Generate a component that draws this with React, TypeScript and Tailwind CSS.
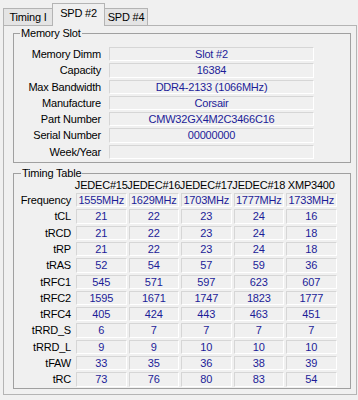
const slotRows: [string, string][] = [
  ["Memory Dimm", "Slot #2"],
  ["Capacity", "16384"],
  ["Max Bandwidth", "DDR4-2133 (1066MHz)"],
  ["Manufacture", "Corsair"],
  ["Part Number", "CMW32GX4M2C3466C16"],
  ["Serial Number", "00000000"],
  ["Week/Year", ""],
];

const headers = ["JEDEC#15", "JEDEC#16", "JEDEC#17", "JEDEC#18", "XMP3400"];

const timings: [string, string[]][] = [
  ["Frequency", ["1555MHz", "1629MHz", "1703MHz", "1777MHz", "1733MHz"]],
  ["tCL", ["21", "22", "23", "24", "16"]],
  ["tRCD", ["21", "22", "23", "24", "18"]],
  ["tRP", ["21", "22", "23", "24", "18"]],
  ["tRAS", ["52", "54", "57", "59", "36"]],
  ["tRFC1", ["545", "571", "597", "623", "607"]],
  ["tRFC2", ["1595", "1671", "1747", "1823", "1777"]],
  ["tRFC4", ["405", "424", "443", "463", "451"]],
  ["tRRD_S", ["6", "7", "7", "7", "7"]],
  ["tRRD_L", ["9", "9", "10", "10", "10"]],
  ["tFAW", ["33", "35", "36", "38", "39"]],
  ["tRC", ["73", "76", "80", "83", "54"]],
];

// sunken readonly box, like a disabled win32 edit
function Field({ value }: { value: string }) {
  return (
    <div className="h-[14.3px] border border-t-[#d6d6d6] border-l-[#d6d6d6] border-r-white border-b-white text-center leading-[12px] whitespace-nowrap text-[#1c1c98]">
      {value}
    </div>
  );
}

export default function App() {
  return (
    <div className="h-[400px] w-[358px] overflow-hidden bg-[#f0f0f0] font-['Liberation_Sans',Arial,sans-serif] text-[11px] tracking-[-0.2px] text-black">
      {/* tabs */}
      <div className="flex h-[25px] items-end pl-[3px]">
        <div className="h-[17px] w-[50px] border border-b-0 border-[#b4b4b4] bg-[#e4e4e4] pt-[2px] text-center leading-[13px]">
          Timing I
        </div>
        <div className="relative z-10 -mx-px mb-[-1px] h-[23px] w-[53px] border border-b-0 border-[#b4b4b4] bg-[#f0f0f0] pt-[3px] text-center leading-[13px]">
          SPD #2
        </div>
        <div className="h-[17px] w-[44px] border border-b-0 border-[#b4b4b4] bg-[#e4e4e4] pt-[2px] text-center leading-[13px]">
          SPD #4
        </div>
      </div>

      <div className="ml-[3px] mr-[1px] h-[370px] border border-[#b4b4b4] bg-[#f0f0f0]">
        <fieldset className="mt-[1px] ml-[9px] mr-[5px] border border-[#a0a0a0] p-0">
          <legend className="ml-[6px] px-[1px] leading-[13px]">Memory Slot</legend>
          <div className="grid grid-cols-[87px_205px] gap-x-[8px] gap-y-[2px] pt-[7px] pb-[3px]">
            {slotRows.map(([label, value]) => (
              <>
                <div key={label} className="h-[14.3px] text-right leading-[14px] whitespace-nowrap">
                  {label}
                </div>
                <Field key={label + "-v"} value={value} />
              </>
            ))}
          </div>
        </fieldset>

        <fieldset className="mt-[4px] ml-[9px] mr-[5px] border border-[#a0a0a0] p-0">
          <legend className="ml-[7px] px-[1px] leading-[13px]">Timing Table</legend>
          <div className="grid grid-cols-[60px_repeat(5,50.5px)] gap-x-[2px] gap-y-[2px] pb-[1px]">
            <div className="h-[11px]" />
            {headers.map((h) => (
              <div key={h} className="flex h-[11px] justify-center leading-[11px] whitespace-nowrap">
                {h}
              </div>
            ))}
            {timings.map(([label, vals]) => (
              <>
                <div key={label} className="h-[14.3px] pr-[3px] text-right leading-[14px] whitespace-nowrap">
                  {label}
                </div>
                {vals.map((v, i) => (
                  <Field key={label + i} value={v} />
                ))}
              </>
            ))}
          </div>
        </fieldset>
      </div>
    </div>
  );
}
